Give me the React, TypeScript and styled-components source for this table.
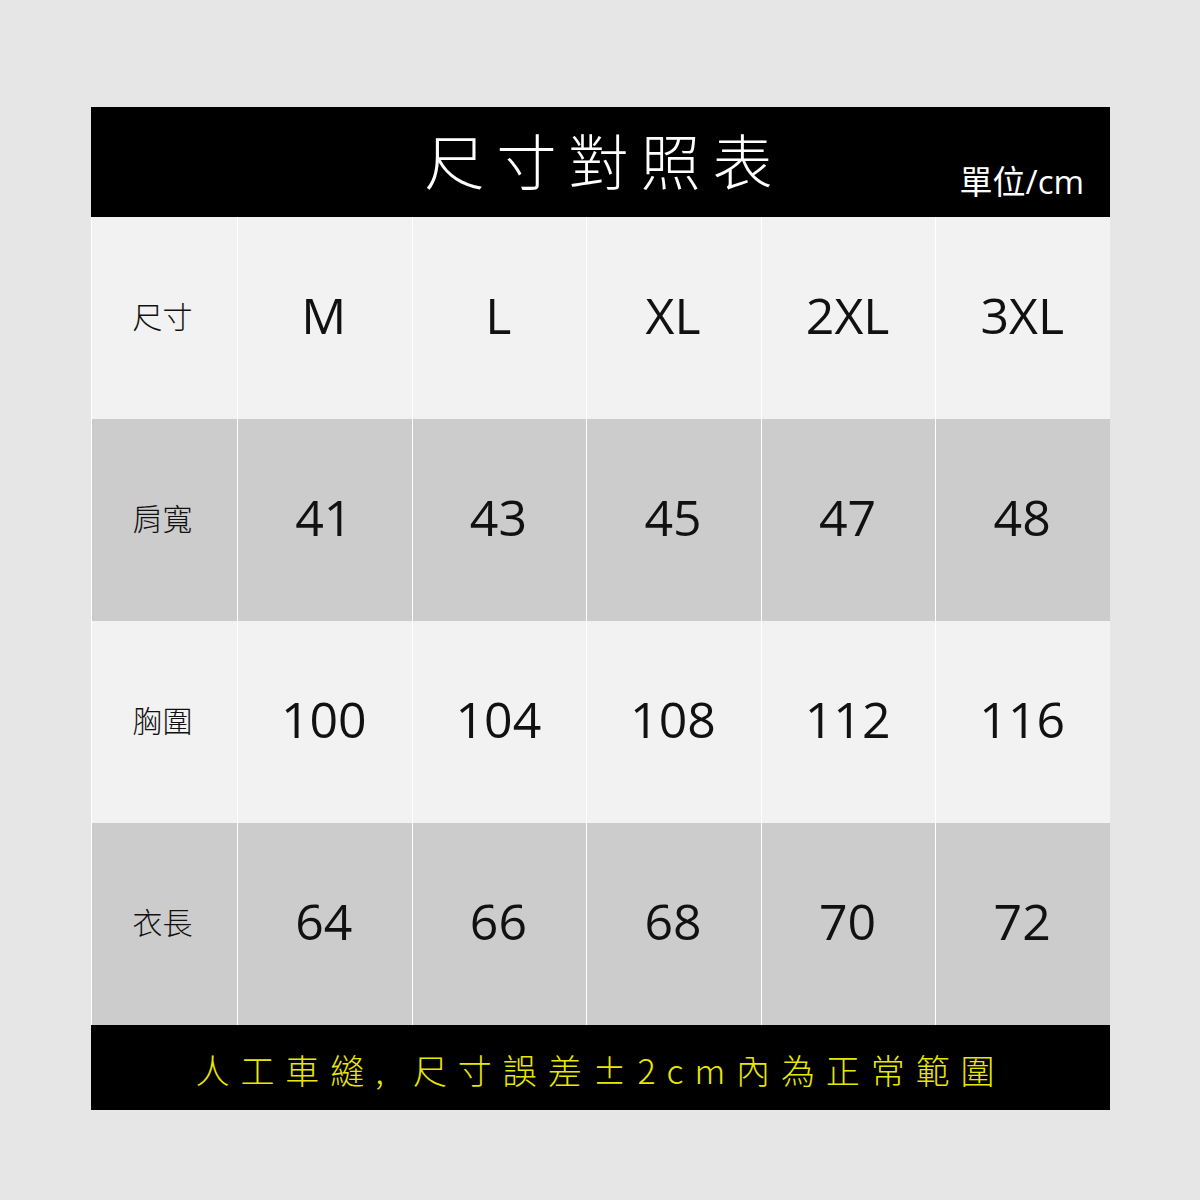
import React from 'react';
import styled, { createGlobalStyle } from 'styled-components';

const GlobalStyle = createGlobalStyle`
  body {
    margin: 0;
    background: #e6e6e6;
    font-family: "Open Sans", "Noto Sans CJK TC", sans-serif;
  }
`;

const Page = styled.div`
  width: 1200px;
  height: 1200px;
  padding: 107px 90px 0 91px;
  box-sizing: border-box;
`;

const Sheet = styled.div`
  width: 1019px;
  display: flex;
  flex-direction: column;
`;

const Header = styled.div`
  height: 110px;
  background: #000;
  position: relative;
  display: flex;
  align-items: center;
  justify-content: center;
`;

const Title = styled.h1`
  margin: 0 0 6px 8px;
  color: #fff;
  font-family: "Noto Sans CJK TC", sans-serif;
  font-weight: 300;
  font-size: 60px;
  letter-spacing: 12px;
  line-height: 1;
`;

const Unit = styled.span`
  position: absolute;
  right: 26px;
  bottom: 19px;
  color: #fff;
  font-family: "Open Sans", "Noto Sans CJK TC", sans-serif;
  font-size: 33px;
  line-height: 1;
  & b {
    font-family: "Noto Sans CJK TC", sans-serif;
    font-weight: 400;
  }
`;

const Row = styled.div<{ $shade: boolean }>`
  display: grid;
  grid-template-columns: 145px repeat(5, 1fr);
  height: 202px;
  background: ${(p) => (p.$shade ? '#cccccc' : '#f2f2f2')};
  border-left: 1px solid #fff;
  box-sizing: border-box;
`;

const Cell = styled.div<{ $label?: boolean }>`
  display: flex;
  align-items: center;
  justify-content: center;
  border-left: ${(p) => (p.$label ? 'none' : '1px solid #fff')};
  color: #111;
  font-family: ${(p) =>
    p.$label ? '"Noto Sans CJK TC", sans-serif' : '"Open Sans", "Noto Sans", sans-serif'};
  font-size: ${(p) => (p.$label ? '30px' : '50px')};
  font-weight: ${(p) => (p.$label ? 300 : 400)};
  padding-bottom: 7px;
  padding-right: ${(p) => (p.$label ? '4px' : '2px')};
`;

const Footer = styled.div`
  height: 85px;
  background: #000;
  display: flex;
  align-items: center;
  justify-content: center;
`;

const Note = styled.p`
  margin: 4px 0 0 0;
  color: #e8e800;
  font-family: "Noto Sans CJK TC", sans-serif;
  font-weight: 300;
  font-size: 34px;
  letter-spacing: 10.9px;
  white-space: pre;
`;

const rows = [
  { label: '尺寸', values: ['M', 'L', 'XL', '2XL', '3XL'] },
  { label: '肩寬', values: ['41', '43', '45', '47', '48'] },
  { label: '胸圍', values: ['100', '104', '108', '112', '116'] },
  { label: '衣長', values: ['64', '66', '68', '70', '72'] },
];

export default function App() {
  return (
    <Page>
      <GlobalStyle />
      <Sheet>
        <Header>
          <Title>尺寸對照表</Title>
          <Unit>
            <b>單位</b>/cm
          </Unit>
        </Header>
        {rows.map((r, i) => (
          <Row key={r.label} $shade={i % 2 === 1}>
            <Cell $label>{r.label}</Cell>
            {r.values.map((v) => (
              <Cell key={v}>{v}</Cell>
            ))}
          </Row>
        ))}
        <Footer>
          <Note>人工車縫, 尺寸誤差±2cm內為正常範圍</Note>
        </Footer>
      </Sheet>
    </Page>
  );
}
